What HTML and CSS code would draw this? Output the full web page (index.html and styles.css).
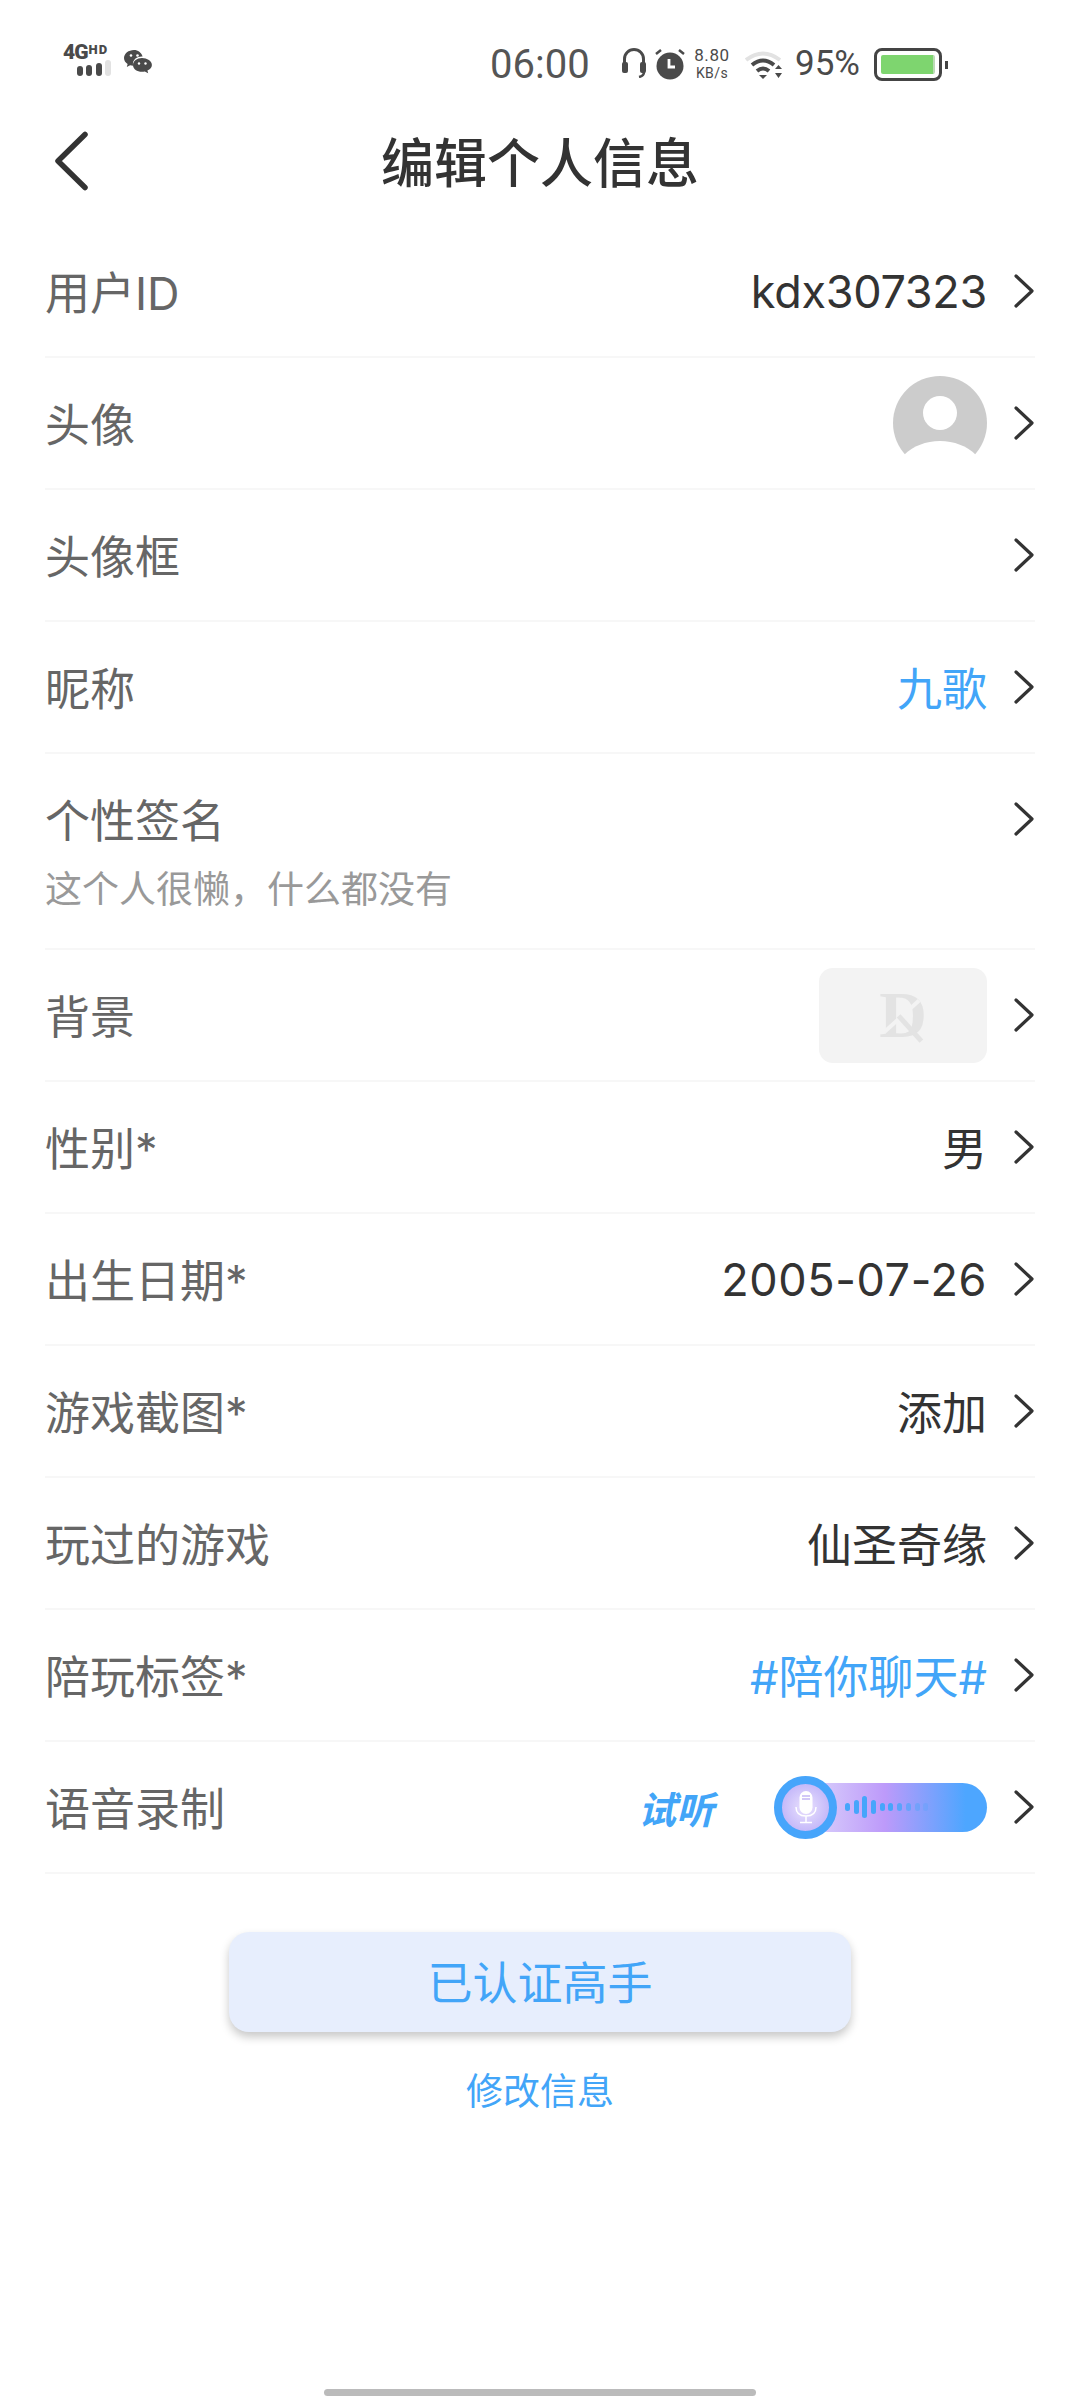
FILE: index.html
```html
<!DOCTYPE html>
<html>
<head>
  <title>编辑个人信息</title>
  <link rel="stylesheet" href="styles.css">
</head>
<body>
  <div class="page">
    <div class="statusbar">
      <div class="net">
        <div class="net-text"><span class="net-4g">4G</span><span class="net-hd">HD</span></div>
        <div class="net-bars"><i></i><i></i><i></i><i class="off"></i></div>
      </div>
      <svg class="wechat" viewBox="0 0 28 24" width="28" height="24">
        <path fill="#4a4a4a" d="M10 0C4.5 0 0 3.6 0 8c0 2.500 1.400 4.600 3.600 6.100L2.800 17l3.300-1.700c1 .3 2 .5 3.100.5-.2-.7-.3-1.300-.3-2 0-4.200 4-7.400 8.900-7.400h.8C17.300 2.700 14 0 10 0z"/>
        <path fill="#4a4a4a" d="M18 8c-5 0-9 3-9 6.900s4 6.900 9 6.900c1 0 1.900-.1 2.800-.4l3.400 1.800-.8-2.800c2.700-1.300 4.500-3 4.500-5.500C28 11 23 8 18 8z"/>
        <circle cx="7" cy="5.500" r="1.300" fill="#fff"/><circle cx="13.500" cy="5.500" r="1.300" fill="#fff"/>
        <circle cx="15" cy="13.500" r="1.200" fill="#fff"/><circle cx="21.500" cy="13.500" r="1.200" fill="#fff"/>
      </svg>
      <div class="clock">06:00</div>
      <svg class="st-headset" viewBox="0 0 24 30" width="24" height="30">
        <path fill="none" stroke="#4a4a4a" stroke-width="3" d="M2.500 16V11a9.500 9.500 0 0 1 19 0v5"/>
        <rect x="0" y="14" width="6" height="11" rx="2" fill="#4a4a4a"/><rect x="18" y="14" width="6" height="11" rx="2" fill="#4a4a4a"/>
        <path fill="none" stroke="#4a4a4a" stroke-width="2.500" d="M22 24q0 4-5 5"/>
      </svg>
      <svg class="st-alarm" viewBox="0 0 30 32" width="30" height="32">
        <circle cx="15" cy="18" r="13.500" fill="#4a4a4a"/>
        <path fill="none" stroke="#fff" stroke-width="2.800" d="M14 11v8h6"/>
        <path stroke="#4a4a4a" stroke-width="2.500" d="M1 6l5-4M29 6l-5-4"/>
      </svg>
      <div class="speed"><div class="speed-val">8.80</div><div class="speed-unit">KB/s</div></div>
      <svg class="st-wifi" viewBox="0 0 38 30" width="38" height="30">
        <path fill="none" stroke="#e2e2e2" stroke-width="4" d="M1 10Q18-3 35 10"/>
        <path fill="none" stroke="#4a4a4a" stroke-width="4" d="M7 15Q18 6 29 15M12 21Q18 16 24 21"/>
        <path fill="#4a4a4a" d="M14 25h8l-4 4zM30 19l3.500-4 3.500 4zM30 23h7l-3.500 5z"/>
      </svg>
      <div class="pct">95%</div>
      <div class="battery"><div class="battery-fill"></div></div>
      <div class="battery-tip"></div>
    </div>

    <div class="titlebar">
      <svg class="back" viewBox="0 0 34 60" width="34" height="60">
        <path fill="none" stroke="#333" stroke-width="5.500" stroke-linecap="round" stroke-linejoin="round" d="M31 3.500L4 30l27 26.500"/>
      </svg>
      <div class="title">编辑个人信息</div>
    </div>

    <div class="list">
      <div class="row">
        <div class="label">用户ID</div>
        <div class="value value-id">kdx307323</div>
        <svg class="chev" viewBox="0 0 22 36"><path d="M3 3l16 15L3 33"/></svg>
      </div>
      <div class="row">
        <div class="label">头像</div>
        <div class="avatar">
          <svg viewBox="0 0 94 94" width="94" height="94">
            <circle cx="47" cy="47" r="47" fill="#ccc"/>
            <circle cx="47" cy="37" r="17" fill="#fff"/>
            <path fill="#fff" d="M11 79C20 70 33 65 47 65s27 5 36 14C74 89 61 95 47 95S20 89 11 79z"/>
          </svg>
        </div>
        <svg class="chev" viewBox="0 0 22 36"><path d="M3 3l16 15L3 33"/></svg>
      </div>
      <div class="row">
        <div class="label">头像框</div>
        <svg class="chev" viewBox="0 0 22 36"><path d="M3 3l16 15L3 33"/></svg>
      </div>
      <div class="row">
        <div class="label">昵称</div>
        <div class="value cjk blue">九歌</div>
        <svg class="chev" viewBox="0 0 22 36"><path d="M3 3l16 15L3 33"/></svg>
      </div>
      <div class="row row-tall">
        <div class="row-line">
          <div class="label">个性签名</div>
          <svg class="chev" viewBox="0 0 22 36"><path d="M3 3l16 15L3 33"/></svg>
        </div>
        <div class="sub">这个人很懒，什么都没有</div>
      </div>
      <div class="row">
        <div class="label">背景</div>
        <div class="thumb"><span class="thumb-logo">D</span><i class="thumb-slash"></i><i class="thumb-arm"></i></div>
        <svg class="chev" viewBox="0 0 22 36"><path d="M3 3l16 15L3 33"/></svg>
      </div>
      <div class="row">
        <div class="label">性别*</div>
        <div class="value cjk">男</div>
        <svg class="chev" viewBox="0 0 22 36"><path d="M3 3l16 15L3 33"/></svg>
      </div>
      <div class="row">
        <div class="label">出生日期*</div>
        <div class="value value-date">2005-07-26</div>
        <svg class="chev" viewBox="0 0 22 36"><path d="M3 3l16 15L3 33"/></svg>
      </div>
      <div class="row">
        <div class="label">游戏截图*</div>
        <div class="value cjk">添加</div>
        <svg class="chev" viewBox="0 0 22 36"><path d="M3 3l16 15L3 33"/></svg>
      </div>
      <div class="row">
        <div class="label">玩过的游戏</div>
        <div class="value cjk">仙圣奇缘</div>
        <svg class="chev" viewBox="0 0 22 36"><path d="M3 3l16 15L3 33"/></svg>
      </div>
      <div class="row">
        <div class="label">陪玩标签*</div>
        <div class="value cjk blue">#陪你聊天#</div>
        <svg class="chev" viewBox="0 0 22 36"><path d="M3 3l16 15L3 33"/></svg>
      </div>
      <div class="row">
        <div class="label">语音录制</div>
        <div class="try">试听</div>
        <div class="voice">
          <div class="voice-mic">
            <svg viewBox="0 0 24 34" width="24" height="34">
              <rect x="5.500" y="1" width="13" height="23" rx="6.500" fill="#fff"/>
              <path fill="none" stroke="#fff" stroke-width="1.500" d="M2 17c0 6 4 9 10 9s10-3 10-9M12 26v6M6 32.500h12"/>
              <path stroke="#c3b6f5" stroke-width="1.500" d="M8 6h8M8 9h8"/>
            </svg>
          </div>
          <div class="wave"><i style="height:8px"></i><i style="height:14px"></i><i style="height:22px"></i><i style="height:14px"></i><i style="height:8px"></i><i style="height:8px"></i><i style="height:8px;opacity:.8"></i><i style="height:8px;opacity:.6"></i><i style="height:8px;opacity:.4"></i><i style="height:8px;opacity:.25"></i></div>
        </div>
        <svg class="chev" viewBox="0 0 22 36"><path d="M3 3l16 15L3 33"/></svg>
      </div>
    </div>

    <div class="actions">
      <div class="btn">已认证高手</div>
      <div class="edit-link">修改信息</div>
    </div>

    <div class="home-bar"></div>
  </div>
</body>
</html>
```

FILE: styles.css
```css
* { box-sizing: border-box; }
body {
  margin: 0; background: #fff; color: #333;
  font-family: "Inter", "Noto Sans CJK SC", sans-serif;
}
.page {
  width: 1080px; height: 2400px;
  display: flex; flex-direction: column;
}

/* status bar */
.statusbar {
  height: 120px; padding: 42px 0 0 63px;
  display: flex; align-items: flex-start;
  font-family: "Roboto", sans-serif; color: #4a4a4a;
}
.net { width: 48px; margin-top: 3px; }
.net-text { display: flex; align-items: flex-start; height: 15px; font-weight: 900; }
.net-4g { font-size: 21px; line-height: 15px; letter-spacing: -1px; }
.net-hd { font-size: 13px; line-height: 9px; letter-spacing: 1px; margin-left: 1px; }
.net-bars { display: flex; gap: 3.500px; align-items: flex-end; justify-content: flex-end; height: 16px; }
.net-bars i { width: 6px; background: #4a4a4a; border-radius: 3px; }
.net-bars i:nth-child(1) { height: 10px; }
.net-bars i:nth-child(2) { height: 11px; }
.net-bars i:nth-child(3) { height: 13px; }
.net-bars i:nth-child(4) { height: 16px; }
.net-bars .off { background: #e2e2e2; }
.wechat { margin: 8px 0 0 13px; }
.clock { width: 100px; margin: 0 0 0 338px; font-size: 40px; line-height: 46px; color: #555; white-space: nowrap; }
.st-headset { margin: 6px 0 0 32px; }
.st-alarm { margin: 6px 0 0 9px; }
.speed { margin: 3px 0 0 8px; width: 38px; text-align: center; white-space: nowrap; }
.speed-val { font-size: 17px; line-height: 20px; letter-spacing: .6px; }
.speed-unit { font-size: 14px; line-height: 17px; letter-spacing: .4px; }
.st-wifi { margin: 8px 0 0 14px; }
.pct { width: 65px; margin: 1px 0 0 12px; font-size: 35px; line-height: 42px; white-space: nowrap; }
.battery {
  width: 68px; height: 33px; margin: 6px 0 0 14px; padding: 4px;
  border: 3px solid #444; border-radius: 8px;
}
.battery-fill { height: 100%; background: #7ed56f; border-radius: 2px; border-right: 2px solid #bcdcb6; }
.battery-tip { width: 3px; height: 8px; margin: 19px 0 0 3px; background: #444; }

/* title */
.titlebar {
  height: 106px; padding-bottom: 18px; position: relative;
  display: flex; align-items: center; justify-content: center;
}
.back { position: absolute; left: 54px; top: 11px; }
.title { font-size: 53px; font-weight: 500; color: #333; line-height: 86px; }

/* rows */
.list { margin: 0 45px; }
.row {
  height: 132px;
  display: flex; align-items: center; justify-content: space-between;
  border-bottom: 2px solid #f7f7f7;
  font-size: 45px;
}
.row-tall { height: 196px; display: block; }
.row-line { height: 130px; display: flex; align-items: center; justify-content: space-between; }
.label { flex: 1; color: #666; margin-bottom: 2px; }
.value { color: #333; }
.cjk { margin-bottom: 2px; }
.value-id { letter-spacing: -.3px; margin-top: 1px; }
.value-date { letter-spacing: .6px; }
.blue { color: #42a5f8; }
.sub { margin-top: -20px; font-size: 37px; line-height: 52px; color: #999; }
.chev { width: 22px; height: 36px; margin-left: 26px; flex: none; }
.chev path { fill: none; stroke: #333; stroke-width: 3.200; stroke-linecap: round; stroke-linejoin: round; }
.avatar { width: 94px; height: 94px; }
.avatar svg { display: block; }
.thumb {
  width: 168px; height: 95px; position: relative;
  display: flex; align-items: center; justify-content: center;
  background: #f3f3f3; border-radius: 14px;
}
.thumb-logo { font-family: "Liberation Serif", serif; font-weight: 700; font-size: 66px; color: #e3e3e3; line-height: 66px; }
.thumb-slash { position: absolute; left: 60px; top: 46px; width: 46px; height: 4px; background: #f3f3f3; transform: rotate(-42deg); }
.thumb-arm { position: absolute; left: 74px; top: 58px; width: 34px; height: 5px; background: #e3e3e3; transform: rotate(48deg); }
.try {
  margin-right: 60px; font-size: 38px; font-weight: 700; font-style: italic;
  color: #42a5f8;
}
.voice {
  width: 213px; height: 49px; position: relative;
  border-radius: 25px;
  background: linear-gradient(to right, #dcd5fb 15%, #bd9afa 52%, #4da6ff 90%);
  display: flex; align-items: center;
}
.voice-mic {
  width: 63px; height: 63px; flex: none;
  border: 8px solid #46a5fb; border-radius: 50%;
  background: radial-gradient(#eae2fd, #b6a8f8);
  display: flex; align-items: center; justify-content: center;
}
.wave { display: flex; align-items: center; gap: 3.700px; margin-left: 8px; }
.wave i { width: 5px; background: #46a5fb; border-radius: 3px; }

/* bottom */
.actions { display: flex; flex-direction: column; align-items: center; margin-top: 58px; }
.btn {
  width: 622px; height: 100px; padding-bottom: 3px;
  display: flex; align-items: center; justify-content: center;
  background: #e7eefd; border-radius: 20px;
  box-shadow: 0 5px 10px rgba(0, 0, 0, .22);
  font-size: 45px; color: #42a5f8;
}
.edit-link { margin-top: 36px; font-size: 37px; line-height: 48px; color: #42a5f8; }
.home-bar {
  width: 432px; height: 7px; margin: auto auto 4px;
  background: #bbb; border-radius: 4px;
}
```
